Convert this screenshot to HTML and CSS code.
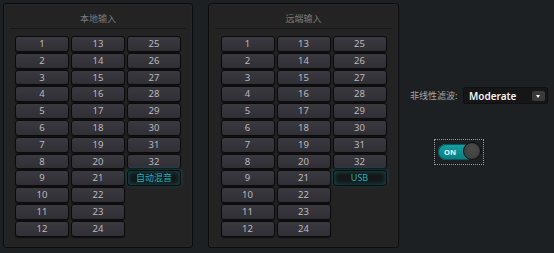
FILE: index.html
```html
<!DOCTYPE html>
<html lang="zh">
<head>
    <meta charset="UTF-8">
    <title>输入设置</title>
    <link rel="stylesheet" href="styles.css">
</head>
<body>
    <div class="page">
        <section class="panel">
            <div class="panel-title">本地输入</div>
            <div class="btn-grid">
                <button class="ch-btn">1</button>
                <button class="ch-btn">2</button>
                <button class="ch-btn">3</button>
                <button class="ch-btn">4</button>
                <button class="ch-btn">5</button>
                <button class="ch-btn">6</button>
                <button class="ch-btn">7</button>
                <button class="ch-btn">8</button>
                <button class="ch-btn">9</button>
                <button class="ch-btn">10</button>
                <button class="ch-btn">11</button>
                <button class="ch-btn">12</button>
                <button class="ch-btn">13</button>
                <button class="ch-btn">14</button>
                <button class="ch-btn">15</button>
                <button class="ch-btn">16</button>
                <button class="ch-btn">17</button>
                <button class="ch-btn">18</button>
                <button class="ch-btn">19</button>
                <button class="ch-btn">20</button>
                <button class="ch-btn">21</button>
                <button class="ch-btn">22</button>
                <button class="ch-btn">23</button>
                <button class="ch-btn">24</button>
                <button class="ch-btn">25</button>
                <button class="ch-btn">26</button>
                <button class="ch-btn">27</button>
                <button class="ch-btn">28</button>
                <button class="ch-btn">29</button>
                <button class="ch-btn">30</button>
                <button class="ch-btn">31</button>
                <button class="ch-btn">32</button>
                <button class="ch-btn active">自动混音</button>
            </div>
        </section>

        <section class="panel">
            <div class="panel-title">远端输入</div>
            <div class="btn-grid">
                <button class="ch-btn">1</button>
                <button class="ch-btn">2</button>
                <button class="ch-btn">3</button>
                <button class="ch-btn">4</button>
                <button class="ch-btn">5</button>
                <button class="ch-btn">6</button>
                <button class="ch-btn">7</button>
                <button class="ch-btn">8</button>
                <button class="ch-btn">9</button>
                <button class="ch-btn">10</button>
                <button class="ch-btn">11</button>
                <button class="ch-btn">12</button>
                <button class="ch-btn">13</button>
                <button class="ch-btn">14</button>
                <button class="ch-btn">15</button>
                <button class="ch-btn">16</button>
                <button class="ch-btn">17</button>
                <button class="ch-btn">18</button>
                <button class="ch-btn">19</button>
                <button class="ch-btn">20</button>
                <button class="ch-btn">21</button>
                <button class="ch-btn">22</button>
                <button class="ch-btn">23</button>
                <button class="ch-btn">24</button>
                <button class="ch-btn">25</button>
                <button class="ch-btn">26</button>
                <button class="ch-btn">27</button>
                <button class="ch-btn">28</button>
                <button class="ch-btn">29</button>
                <button class="ch-btn">30</button>
                <button class="ch-btn">31</button>
                <button class="ch-btn">32</button>
                <button class="ch-btn active">USB</button>
            </div>
        </section>

        <div class="controls">
            <div class="filter-row">
                <span class="filter-label">非线性滤波:</span>
                <div class="select">
                    <span class="select-value">Moderate</span>
                    <span class="select-arrow"></span>
                </div>
            </div>
            <div class="toggle-wrap">
                <div class="toggle">
                    <span class="toggle-text">ON</span>
                    <span class="toggle-knob"></span>
                </div>
            </div>
        </div>
    </div>
</body>
</html>
```

FILE: styles.css
```css
body {
    margin: 0;
    background-color: #1d2023;
    font-family: "Noto Sans", "Noto Sans CJK SC", sans-serif;
}

.page {
    display: flex;
    align-items: flex-start;
    padding: 3px;
}

.panel {
    width: 188px;
    height: 243px;
    background-color: #232323;
    border: 1px solid #0c0c0c;
    border-radius: 3px;
    margin-right: 15px;
    box-shadow: inset 0 0 0 1px #262626;
}

.panel + .panel {
    width: 189px;
    margin-right: 0;
}

.panel-title {
    margin: 0 6px;
    padding-top: 8px;
    padding-bottom: 2px;
    height: 14px;
    line-height: 14px;
    text-align: center;
    font-family: "Noto Sans CJK SC", sans-serif;
    font-size: 9px;
    color: #7c7c7c;
    border-bottom: 1px solid #181818;
}

.btn-grid {
    display: grid;
    grid-auto-flow: column;
    grid-template-columns: repeat(3, 54px);
    grid-template-rows: repeat(12, 15.8px);
    column-gap: 2px;
    row-gap: 1px;
    justify-content: center;
    margin-top: 7px;
}

.ch-btn {
    padding: 0;
    margin: 0;
    font-family: "Noto Sans", sans-serif;
    font-size: 9.5px;
    line-height: 14px;
    color: #b9b9bd;
    background: linear-gradient(#3a393f, #302f35);
    border: 1px solid #0b0b0b;
    border-radius: 3px;
    box-shadow: 0 1px 1px rgba(0, 0, 0, 0.6);
    cursor: pointer;
}

.ch-btn.active {
    font-family: "Noto Sans", "Noto Sans CJK SC", sans-serif;
    font-size: 9px;
    color: #1fb3bf;
    background: #141819;
    box-shadow: inset 0 0 5px rgba(20, 170, 185, 0.45), 0 -1px 4px rgba(20, 170, 185, 0.35);
}

.controls {
    padding-left: 11px;
}

.filter-row {
    display: flex;
    align-items: center;
    margin-top: 84px;
}

.filter-label {
    width: 53px;
    font-family: "Noto Sans CJK SC", sans-serif;
    font-size: 9px;
    color: #a4a4a4;
}

.select {
    display: flex;
    align-items: center;
    justify-content: space-between;
    width: 76px;
    height: 15px;
    padding: 0 2px 0 5px;
    background-color: #161616;
    border: 1px solid #101010;
    border-radius: 2px;
    box-sizing: content-box;
}

.select-value {
    font-family: "Noto Sans", sans-serif;
    font-size: 10px;
    font-weight: 600;
    color: #f2f2f2;
}

.select-arrow {
    position: relative;
    width: 13px;
    height: 10px;
    background-color: #3a3a3a;
    border-radius: 2px;
}

.select-arrow::after {
    content: "";
    position: absolute;
    left: 4px;
    top: 4px;
    border-left: 2.5px solid transparent;
    border-right: 2.5px solid transparent;
    border-top: 3px solid #ffffff;
}

.toggle-wrap {
    display: inline-flex;
    margin: 35px 0 0 24px;
    padding: 4px 4px 4px 3px;
    border: 1px dotted #9a9a9a;
}

.toggle {
    position: relative;
    width: 41px;
    height: 16px;
    border-radius: 8px;
    background: linear-gradient(#16a0a5, #0b7c80);
    box-shadow: inset 0 0 0 1px #0a5558;
}

.toggle-text {
    position: absolute;
    left: 6px;
    top: 2px;
    font-family: "Noto Sans", sans-serif;
    font-size: 7.5px;
    font-weight: 700;
    line-height: 12px;
    color: #e8f6f6;
}

.toggle-knob {
    position: absolute;
    right: -2px;
    top: -2px;
    width: 18px;
    height: 18px;
    border-radius: 50%;
    background: radial-gradient(circle at 50% 35%, #4c4c4c, #3a3a3a);
    border: 1px solid #0c0c0c;
    box-sizing: border-box;
}
```
